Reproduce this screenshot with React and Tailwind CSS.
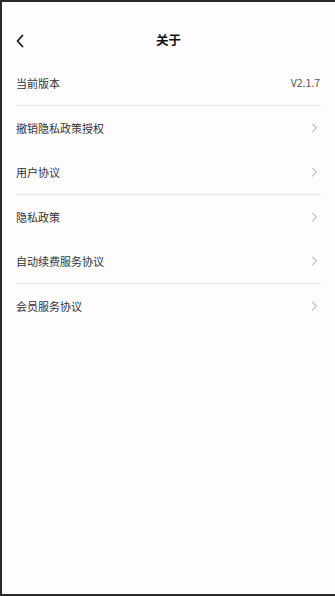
import React from 'react';

const ITEMS = [
  { label: '当前版本', value: 'V2.1.7', divider: true },
  { label: '撤销隐私政策授权' },
  { label: '用户协议', divider: true },
  { label: '隐私政策' },
  { label: '自动续费服务协议', divider: true },
  { label: '会员服务协议' },
];

function Chevron() {
  return (
    <svg width="7" height="10" viewBox="0 0 7 10" fill="none">
      <path d="M1.5 1 L5.5 5 L1.5 9" stroke="#9a9a9a" strokeWidth="1" strokeLinecap="round" strokeLinejoin="round" />
    </svg>
  );
}

export default function App() {
  return (
    <div
      className="w-full h-[596px] bg-[#fffcff] border-t-2 border-l-2 border-b-2 border-[#2b2b2b] overflow-hidden"
      style={{ fontFamily: '"Noto Sans CJK SC", "Noto Sans", sans-serif' }}
    >
      {/* 状态栏 */}
      <div className="h-[18px]" />

      {/* 标题栏 */}
      <div className="relative h-[41px] flex items-center justify-center">
        <button className="absolute left-[13px] top-1/2 -translate-y-1/2 p-0">
          <svg width="10" height="14" viewBox="0 0 10 14" fill="none">
            <path d="M7.5 1.5 L2.5 7 L7.5 12.5" stroke="#1a1a1a" strokeWidth="1.8" strokeLinecap="round" strokeLinejoin="round" />
          </svg>
        </button>
        <h1 className="text-[12.5px] font-bold text-[#111]">关于</h1>
      </div>

      {/* 列表 */}
      <div className="px-[14px]">
        {ITEMS.map((it) => (
          <div
            key={it.label}
            className={`h-[44px] flex items-center justify-between box-content ${it.divider ? 'border-b border-[#e6e4e8]' : ''}`}
          >
            <span className="text-[11px] text-[#333]">{it.label}</span>
            {it.value ? (
              <span className="text-[10.5px] text-[#555] pr-[1px]">{it.value}</span>
            ) : (
              <span className="pr-[3px] flex items-center"><Chevron /></span>
            )}
          </div>
        ))}
      </div>
    </div>
  );
}
